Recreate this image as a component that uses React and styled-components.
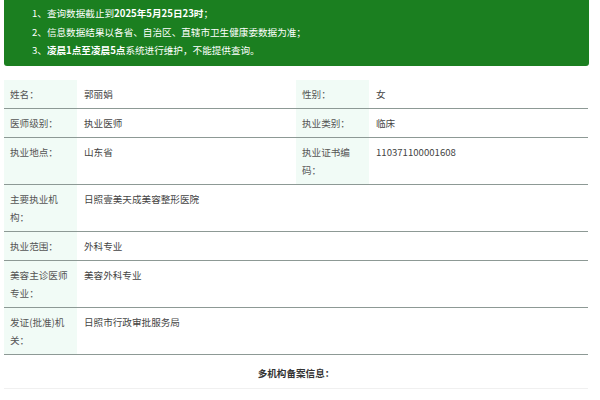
import React from 'react';
import styled, { createGlobalStyle } from 'styled-components';

const GlobalStyle = createGlobalStyle`
  body {
    margin: 0;
    background: #fff;
    font-family: "Noto Sans CJK SC", "Microsoft YaHei", sans-serif;
  }
`;

const rows = [
  [['姓名：', '郭丽娟'], ['性别：', '女']],
  [['医师级别：', '执业医师'], ['执业类别：', '临床']],
  [['执业地点：', '山东省'], ['执业证书编码：', '110371100001608']],
  [['主要执业机构：', '日照壹美天成美容整形医院']],
  [['执业范围：', '外科专业']],
  [['美容主诊医师专业：', '美容外科专业']],
  [['发证(批准)机关：', '日照市行政审批服务局']],
];

function App() {
  return (
    <Page>
      <GlobalStyle />
      <Notice>
        <p>1、查询数据截止到<b>2025年5月25日23时</b>；</p>
        <p>2、信息数据结果以各省、自治区、直辖市卫生健康委数据为准；</p>
        <p>3、<b>凌晨1点至凌晨5点</b>系统进行维护，不能提供查询。</p>
      </Notice>

      <InfoTable>
        <colgroup>
          <Col $label />
          <Col />
          <Col $label />
          <Col />
        </colgroup>
        <tbody>
          {rows.map((row, i) => (
            <tr key={i}>
              {row.map(([label, value], j) => (
                <React.Fragment key={j}>
                  <Label>{label}</Label>
                  <Value colSpan={row.length === 1 ? 3 : 1}>{value}</Value>
                </React.Fragment>
              ))}
            </tr>
          ))}
          <tr>
            <SectionTitle colSpan={4}>多机构备案信息：</SectionTitle>
          </tr>
        </tbody>
      </InfoTable>
    </Page>
  );
}

const Page = styled.div`
  width: 585px;
  margin-left: 4px;
`;

const Notice = styled.div`
  background: #1b7f20;
  color: #fff;
  border-radius: 0 0 3px 3px;
  padding: 4px 10px 6px 28px;
  font-size: 9.6px;
  line-height: 18.5px;

  p {
    margin: 0;
  }

  b {
    font-weight: bold;
  }
`;

const InfoTable = styled.table`
  width: 584px;
  margin-top: 14px;
  border-collapse: collapse;
  table-layout: fixed;
  font-size: 9.6px;
  line-height: 18px;

  td {
    vertical-align: top;
    padding: 5px 8px 5px 6px;
    border-bottom: 1px solid #8d9995;
  }
`;

const Col = styled.col`
  width: ${p => (p.$label ? '12.5%' : '37.5%')};
`;

const Label = styled.td`
  background: #f1fbf6;
  color: #555;
`;

const Value = styled.td`
  background: #fff;
  color: #444;
  && {
    padding-left: 7px;
  }
`;

const SectionTitle = styled.td`
  && {
    text-align: center;
    font-weight: bold;
    color: #333;
    padding: 9px 0 6px;
    border-bottom: 1px solid #f0f0f0;
  }
`;

export default App;
